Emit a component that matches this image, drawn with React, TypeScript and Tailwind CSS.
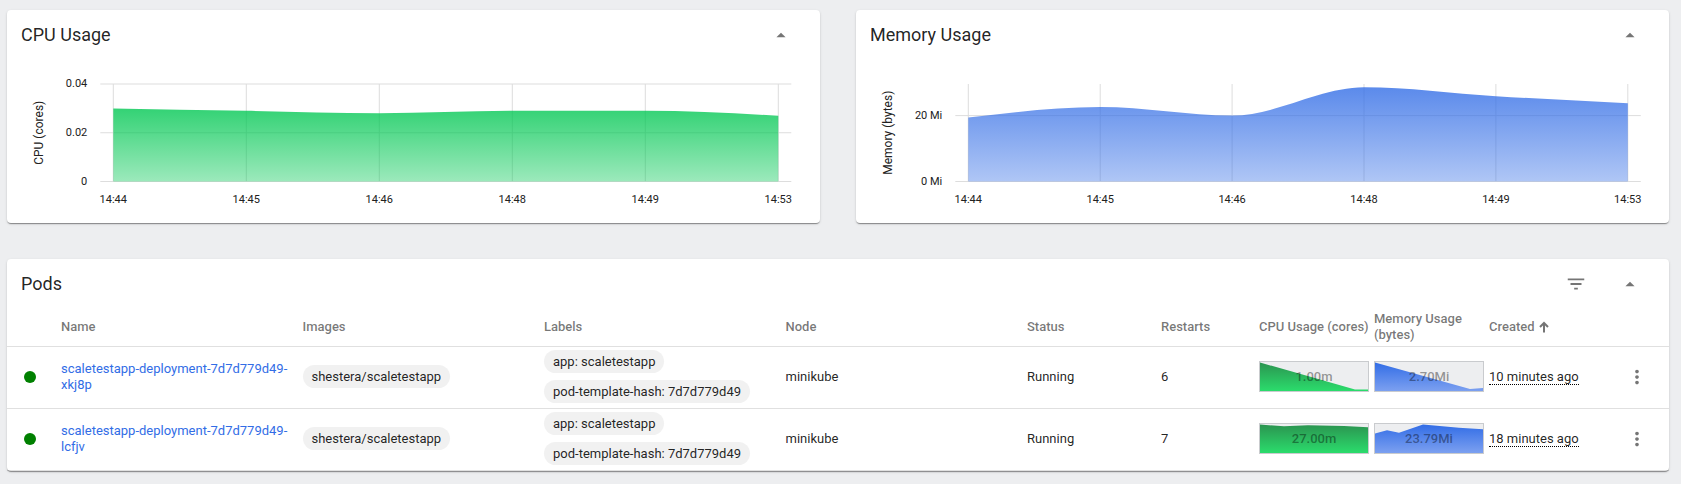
import React from "react";

type Tick = { value: number; label: string };

type Chart = {
  id: string;
  title: string;
  axis: string;
  color: string;
  max: number;
  left: number;
  step: number;
  ticks: Tick[];
  values: number[];
};

const TIMES = ["14:44", "14:45", "14:46", "14:48", "14:49", "14:53"];

const CHARTS: Chart[] = [
  {
    id: "cpu",
    title: "CPU Usage",
    axis: "CPU (cores)",
    color: "#00c752",
    max: 0.04,
    left: 106.3,
    step: 133,
    ticks: [
      { value: 0, label: "0" },
      { value: 0.02, label: "0.02" },
      { value: 0.04, label: "0.04" },
    ],
    values: [0.03, 0.029, 0.028, 0.029, 0.029, 0.027],
  },
  {
    id: "memory",
    title: "Memory Usage",
    axis: "Memory (bytes)",
    color: "#326de6",
    max: 29.6,
    left: 112.3,
    step: 131.9,
    ticks: [
      { value: 0, label: "0 Mi" },
      { value: 20, label: "20 Mi" },
    ],
    values: [19.4, 22.6, 20, 28.6, 25.9, 23.79],
  },
];

const PLOT_TOP = 26;
const PLOT_BOTTOM = 123.5;

/** Monotone cubic curve through evenly spaced points. */
function monotonePath(xs: number[], ys: number[]): string {
  const last = xs.length - 1;
  const slopes = xs.slice(1).map((x, i) => (ys[i + 1] - ys[i]) / (x - xs[i]));
  const tangents = xs.map((_, i) => {
    if (i === 0 || i === last) return 0;
    const a = slopes[i - 1];
    const b = slopes[i];
    if (a * b <= 0) return 0;
    return Math.sign(a) * 2 * Math.min(Math.abs(a), Math.abs(b), Math.abs(a + b) / 4);
  });
  tangents[0] = (3 * slopes[0] - tangents[1]) / 2;
  tangents[last] = (3 * slopes[last - 1] - tangents[last - 1]) / 2;
  let d = `M${xs[0]},${ys[0]}`;
  for (let i = 0; i < last; i++) {
    const h = (xs[i + 1] - xs[i]) / 3;
    d += `C${xs[i] + h},${ys[i] + h * tangents[i]} ${xs[i + 1] - h},${ys[i + 1] - h * tangents[i + 1]} ${xs[i + 1]},${ys[i + 1]}`;
  }
  return d;
}

function AreaChart({ chart }: { chart: Chart }) {
  const y = (v: number) => PLOT_BOTTOM - (v / chart.max) * (PLOT_BOTTOM - PLOT_TOP);
  const xs = chart.values.map((_, i) => chart.left + i * chart.step);
  const right = xs[xs.length - 1];
  const area = `${monotonePath(xs, chart.values.map(y))}V${PLOT_BOTTOM}H${chart.left}Z`;
  return (
    <svg viewBox="0 0 813 165" className="block h-auto w-full" role="img" aria-label={chart.title}>
      <defs>
        <linearGradient id={chart.id} x1="0" y1="0" x2="0" y2="1">
          <stop offset="0" stopColor={chart.color} stopOpacity="0.8" />
          <stop offset="1" stopColor={chart.color} stopOpacity="0.39" />
        </linearGradient>
      </defs>
      <g stroke="#dddddd" strokeWidth="1">
        {chart.ticks.map((t) => (
          <line key={t.label} x1={chart.left - 13} x2={right + 13} y1={y(t.value)} y2={y(t.value)} />
        ))}
        {xs.map((x) => (
          <line key={x} x1={x} x2={x} y1={PLOT_TOP} y2={PLOT_BOTTOM} />
        ))}
      </g>
      <path d={area} fill={`url(#${chart.id})`} />
      <g fill="#212121" className="text-[11px]">
        {chart.ticks.map((t) => (
          <text key={t.label} x={chart.left - 26} y={y(t.value) + 3} textAnchor="end">
            {t.label}
          </text>
        ))}
        {xs.map((x, i) => (
          <text key={x} x={x} y={145} textAnchor="middle">
            {TIMES[i]}
          </text>
        ))}
      </g>
      <text
        transform={`translate(36 ${(PLOT_TOP + PLOT_BOTTOM) / 2}) rotate(-90)`}
        textAnchor="middle"
        fill="#212121"
        className="text-[12px]"
      >
        {chart.axis}
      </text>
    </svg>
  );
}

function IconButton({ label, path }: { label: string; path: string }) {
  return (
    <button type="button" aria-label={label} className="flex size-10 items-center justify-center text-black/54">
      <svg viewBox="0 0 24 24" className="size-[22px]" fill="currentColor">
        <path d={path} />
      </svg>
    </button>
  );
}

const FILTER = "M10 18h4v-2h-4v2zM3 6v2h18V6H3zm3 7h12v-2H6v2z";
const COLLAPSE = "M7 14.5l5-5 5 5z";
const MORE =
  "M12 8c1.1 0 2-.9 2-2s-.9-2-2-2-2 .9-2 2 .9 2 2 2zm0 2c-1.1 0-2 .9-2 2s.9 2 2 2 2-.9 2-2-.9-2-2-2zm0 6c-1.1 0-2 .9-2 2s.9 2 2 2 2-.9 2-2-.9-2-2-2z";

function Card({ title, filter, children }: { title: string; filter?: boolean; children: React.ReactNode }) {
  return (
    <section className="min-w-0 rounded-sm bg-white shadow-[0_2px_1px_-1px_rgba(0,0,0,0.24),0_1px_1px_0_rgba(0,0,0,0.18),0_1px_3px_0_rgba(0,0,0,0.12)]">
      <header className="flex h-12 items-center justify-between pt-0.5 pr-[19px] pl-[14px]">
        <h2 className="text-lg">{title}</h2>
        <div className="flex gap-[14px]">
          {filter && <IconButton label="Filter" path={FILTER} />}
          <IconButton label="Collapse" path={COLLAPSE} />
        </div>
      </header>
      {children}
    </section>
  );
}

function Chip({ children }: { children: React.ReactNode }) {
  return <span className="flex h-[23px] items-center rounded-full bg-[#f1f1f1] px-[9px]">{children}</span>;
}

function Spark({ id, top, bottom, d, value }: { id: string; top: string; bottom: string; d: string; value: string }) {
  return (
    <div className="grid h-[31px] w-[110px] border border-[#c9cbce] bg-[#edeef0]">
      <svg viewBox="0 0 108 29" className="col-start-1 row-start-1 block" aria-hidden="true">
        <defs>
          <linearGradient id={id} x1="0" y1="0" x2="0" y2="1">
            <stop offset="0" stopColor={top} />
            <stop offset="1" stopColor={bottom} />
          </linearGradient>
        </defs>
        <path d={d} fill={`url(#${id})`} />
      </svg>
      <span className="z-10 col-start-1 row-start-1 self-center text-center font-medium text-black/40">{value}</span>
    </div>
  );
}

const PODS = [
  {
    name: "scaletestapp-deployment-7d7d779d49-xkj8p",
    restarts: 6,
    cpu: "1.00m",
    cpuPath: "M0 .5L95 27.5H108V29H0Z",
    memory: "2.70Mi",
    memoryPath: "M0 .5L95 27L108 26V29H0Z",
    created: "10 minutes ago",
  },
  {
    name: "scaletestapp-deployment-7d7d779d49-lcfjv",
    restarts: 7,
    cpu: "27.00m",
    cpuPath: "M0 .5L24 2.3L48 1.2L84 2L108 3.2V29H0Z",
    memory: "23.79Mi",
    memoryPath: "M0 9.5L12 6.3L24 8.8L48 .5L84 3.7L108 5.3V29H0Z",
    created: "18 minutes ago",
  },
];

export default function App() {
  return (
    <main className="flex min-h-screen flex-col gap-9 bg-[#edeef0] pt-[10px] pr-3 pb-3 pl-[7px] font-[Roboto,sans-serif] text-black/87">
      <div className="grid grid-cols-2 gap-9">
        {CHARTS.map((chart) => (
          <Card key={chart.id} title={chart.title}>
            <AreaChart chart={chart} />
          </Card>
        ))}
      </div>
      <Card title="Pods" filter>
        <table className="w-full table-fixed border-separate border-spacing-0 text-left text-[13px] leading-4">
          <colgroup>
            <col className="w-[54px]" />
            <col />
            <col />
            <col />
            <col />
            <col className="w-[134px]" />
            <col className="w-[98px]" />
            <col className="w-[115px]" />
            <col className="w-[115px]" />
            <col className="w-[115px]" />
            <col className="w-[65px]" />
          </colgroup>
          <thead>
            <tr className="h-10 text-black/54 *:border-b *:border-black/12 *:font-medium">
              <th aria-label="State" />
              <th>Name</th>
              <th>Images</th>
              <th>Labels</th>
              <th>Node</th>
              <th>Status</th>
              <th>Restarts</th>
              <th>CPU Usage (cores)</th>
              <th>Memory Usage (bytes)</th>
              <th>
                <button type="button" className="flex items-center gap-1">
                  Created
                  <svg viewBox="0 0 10 12" className="h-3 w-[10px]" fill="none" stroke="currentColor" strokeWidth="2">
                    <path d="M5 11.5V2M1 6L5 2L9 6" />
                  </svg>
                </button>
              </th>
              <th aria-label="Actions" />
            </tr>
          </thead>
          <tbody>
            {PODS.map((pod, i) => (
              <tr key={pod.name} className="h-[62px] *:border-b *:border-black/12 *:pb-0.5">
                <td>
                  <span className="ml-[17px] block size-3 rounded-full bg-[#008000]" />
                </td>
                <td className="pr-2">
                  <a href="#pod" className="text-[#326de6]">
                    {pod.name}
                  </a>
                </td>
                <td>
                  <div className="flex">
                    <Chip>shestera/scaletestapp</Chip>
                  </div>
                </td>
                <td>
                  <div className="flex flex-col items-start gap-[7px]">
                    <Chip>app: scaletestapp</Chip>
                    <Chip>pod-template-hash: 7d7d779d49</Chip>
                  </div>
                </td>
                <td>minikube</td>
                <td>Running</td>
                <td>{pod.restarts}</td>
                <td>
                  <Spark id={`cpu-${i}`} top="#2b9450" bottom="#2bdc6c" d={pod.cpuPath} value={pod.cpu} />
                </td>
                <td>
                  <Spark id={`memory-${i}`} top="#326de6" bottom="#7ca0f0" d={pod.memoryPath} value={pod.memory} />
                </td>
                <td>
                  <span className="border-b border-dotted border-black">{pod.created}</span>
                </td>
                <td>
                  <div className="flex justify-center">
                    <IconButton label="More actions" path={MORE} />
                  </div>
                </td>
              </tr>
            ))}
          </tbody>
        </table>
      </Card>
    </main>
  );
}
